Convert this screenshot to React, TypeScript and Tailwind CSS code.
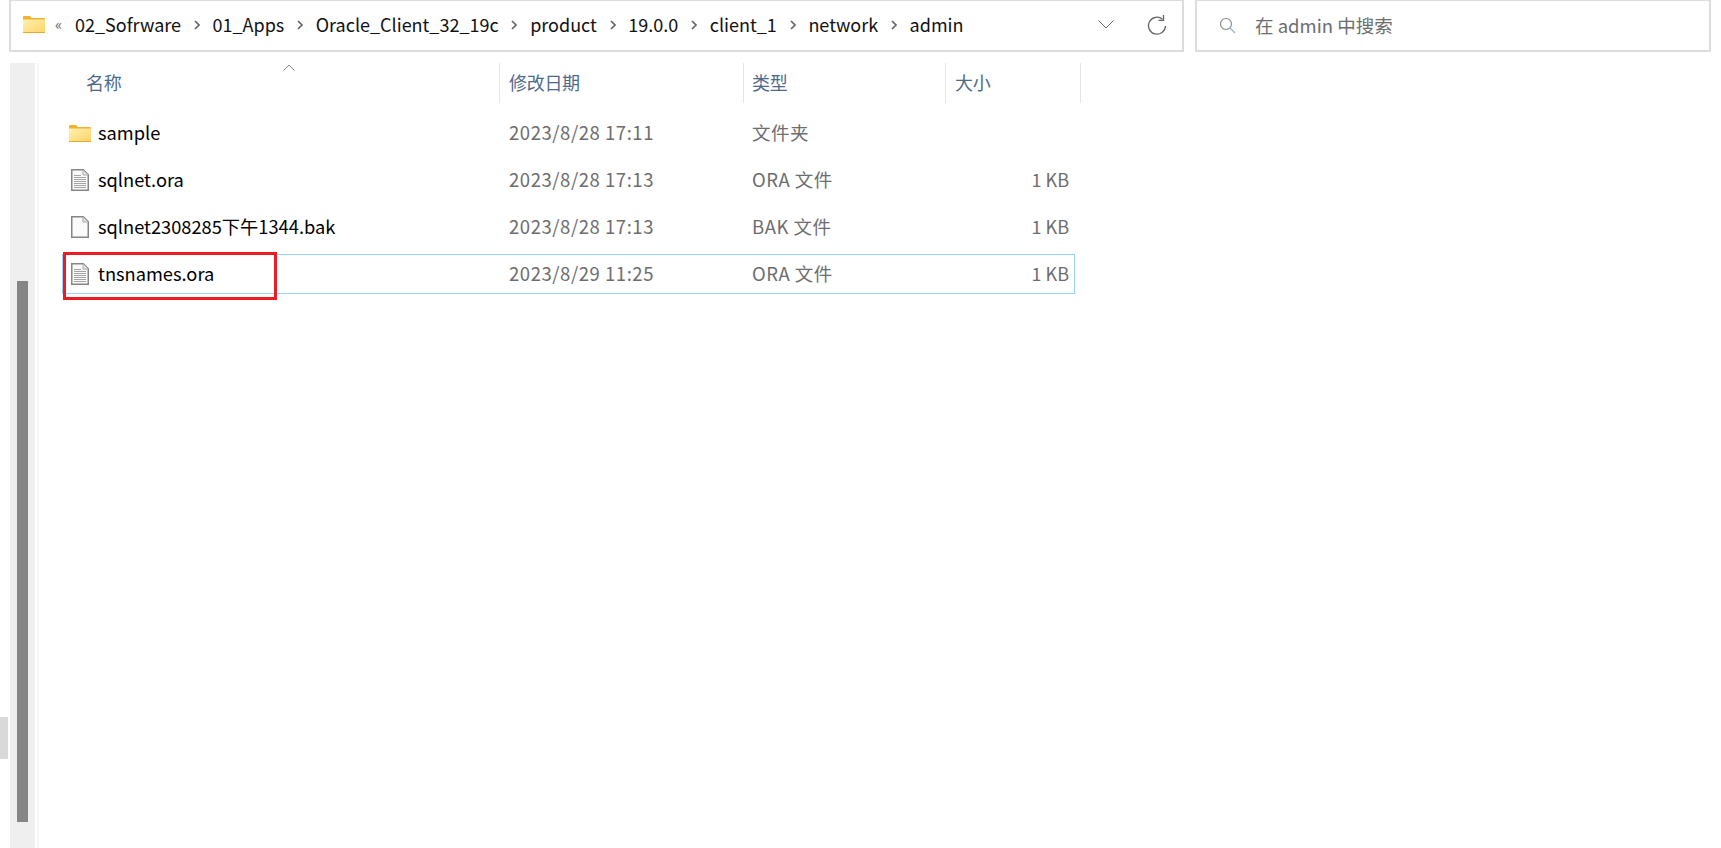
import { Fragment } from 'react'

const crumbs = ['02_Sofrware', '01_Apps', 'Oracle_Client_32_19c', 'product', '19.0.0', 'client_1', 'network', 'admin']

const rows = [
  { name: 'sample', date: '2023/8/28 17:11', type: '文件夹', size: '', icon: 'folder' },
  { name: 'sqlnet.ora', date: '2023/8/28 17:13', type: 'ORA 文件', size: '1 KB', icon: 'text' },
  { name: 'sqlnet2308285下午1344.bak', date: '2023/8/28 17:13', type: 'BAK 文件', size: '1 KB', icon: 'blank' },
  { name: 'tnsnames.ora', date: '2023/8/29 11:25', type: 'ORA 文件', size: '1 KB', icon: 'text', selected: true },
]

function FolderIcon({ className }: { className: string }) {
  return (
    <svg viewBox="0 0 22 17" className={className}>
      <defs>
        <linearGradient id="fold" x1="0" y1="0" x2="1" y2="1">
          <stop offset="0" stopColor="#fff0b0" />
          <stop offset="1" stopColor="#fdd468" />
        </linearGradient>
      </defs>
      <path d="M0 1a1 1 0 0 1 1-1h6l2 2h12a1 1 0 0 1 1 1v2H0z" fill="#f2b330" />
      <path d="M0 3.5h22V17H0z" fill="url(#fold)" />
      <path d="M0 16h22v1H0z" fill="#eba92b" />
    </svg>
  )
}

function DocIcon({ lines }: { lines: boolean }) {
  return (
    <svg viewBox="0 0 18 22" className="w-[18px] h-[22px] shrink-0">
      <path d="M.75.75h11.5l5 5v15.5H.75z" fill="#fafafa" stroke="#868686" strokeWidth="1.5" />
      <path d="M12 1v5h5" fill="#e8e8e8" stroke="#a8a8a8" />
      {lines && (
        <path d="M3 6.5h7M3 8.5h12M3 10.5h12M3 12.5h12M3 14.5h12M3 16.5h12M3 18.5h12" stroke="#a3a3a3" strokeWidth="1" />
      )}
    </svg>
  )
}

export default function App() {
  return (
    <div className="w-[1721px] h-[848px] overflow-hidden bg-white font-['Noto_Sans_CJK_SC',sans-serif] flex flex-col">
      {/* Address and search */}
      <div className="flex h-[52px] shrink-0 pl-[9px] gap-[11px]">
        <div className="w-[1175px] border-2 border-t border-[#dcdcdc] flex items-center pl-[12px] pb-[2px] text-[18px] text-[#111]">
          <FolderIcon className="w-[22px] h-[17px] shrink-0" />
          <span className="ml-[10px] w-[20px] text-[15px] text-[#666]">«</span>
          {crumbs.map((c, i) => (
            <Fragment key={c}>
              {i > 0 && (
                <svg viewBox="0 0 6 10" className="w-[6px] h-[10px] mx-[12.75px] shrink-0">
                  <path d="M1 1l4 4-4 4" fill="none" stroke="#666" strokeWidth="1.7" />
                </svg>
              )}
              <span className="whitespace-nowrap">{c}</span>
            </Fragment>
          ))}
          <svg viewBox="0 0 16 9" className="w-[16px] h-[9px] ml-auto shrink-0">
            <path d="M.5.5L8 8 15.5.5" fill="none" stroke="#666" />
          </svg>
          <svg viewBox="0 0 20 22" className="w-[20px] h-[22px] ml-[33px] mr-[15px] shrink-0">
            <path d="M15.5 5.2A8.5 8.5 0 1 0 18.5 12" fill="none" stroke="#666" strokeWidth="1.3" />
            <path d="M11.5 6.3h5V1" fill="none" stroke="#666" strokeWidth="1.3" />
          </svg>
        </div>
        <div className="w-[516px] border-2 border-t border-[#dcdcdc] flex items-center pl-[22px] gap-[19px] text-[18.5px] text-[#6d6d6d]">
          <svg viewBox="0 0 17 17" className="w-[17px] h-[17px] shrink-0">
            <circle cx="7" cy="7" r="5.5" fill="none" stroke="#8b8b8b" strokeWidth="1.2" />
            <path d="M11 11l5 5" stroke="#8fb4d8" strokeWidth="1.3" />
          </svg>
          <span>在 admin 中搜索</span>
        </div>
      </div>

      <div className="flex flex-1 pt-[11px] min-h-0">
        {/* Left edge: pane tab and scroll bar */}
        <div className="w-[10px] shrink-0 pt-[654px]">
          <div className="w-[8px] h-[42px] bg-[#d9d9d9]" />
        </div>
        <div className="w-[25px] shrink-0 bg-[#efefef] pt-[218px] pl-[7px]">
          <div className="w-[11px] h-[541px] bg-[#868686]" />
        </div>
        <div className="w-[2px] shrink-0" />
        <div className="w-[2px] shrink-0 bg-[#f7f7f7]" />

        {/* File list */}
        <div className="flex-1 min-w-0">
          <div className="relative flex h-[40px] text-[18px] text-[#4d6a8c] tracking-[-0.3px]">
            <svg viewBox="0 0 12 7" className="absolute left-[244px] top-[1px] w-[12px] h-[7px]">
              <path d="M.5 6.5L6 1l5.5 5.5" fill="none" stroke="#888" />
            </svg>
            <div className="w-[461px] pl-[47px] pt-[6px] border-r border-[#e5e5e5]">名称</div>
            <div className="w-[244px] pl-[9px] pt-[6px] border-r border-[#e5e5e5]">修改日期</div>
            <div className="w-[202px] pl-[8px] pt-[6px] border-r border-[#e5e5e5]">类型</div>
            <div className="w-[135px] pl-[9px] pt-[6px] border-r border-[#e5e5e5]">大小</div>
          </div>

          <div className="ml-[23px] w-[1013px] pt-[10px] flex flex-col gap-[7px]">
            {rows.map((r) => (
              <div
                key={r.name}
                className={`relative h-[40px] flex items-center border ${
                  r.selected ? 'border-[#99d1ff]' : 'border-transparent'
                }`}
              >
                <div className="w-[35px] flex items-center shrink-0">
                  {r.icon === 'folder' ? (
                    <div className="pl-[6px]">
                      <FolderIcon className="w-[22px] h-[17px] shrink-0" />
                    </div>
                  ) : (
                    <div className="pl-[8px]">
                      <DocIcon lines={r.icon === 'text'} />
                    </div>
                  )}
                </div>
                <div className="w-[411px] text-[18.25px] text-black whitespace-nowrap">{r.name}</div>
                <div className="w-[243px] text-[18.5px] tracking-[0.55px] text-[#6d6d6d] whitespace-nowrap">{r.date}</div>
                <div className="w-[200px] text-[18.5px] tracking-[0.5px] text-[#6d6d6d] whitespace-nowrap">{r.type}</div>
                <div className="flex-1 pb-[2px] pr-[5px] text-right text-[18px] text-[#6d6d6d]">{r.size}</div>
                {r.selected && (
                  <div className="absolute left-0 -top-[3px] w-[214px] h-[48px] border-[3px] border-[#ed1c24]" />
                )}
              </div>
            ))}
          </div>
        </div>
      </div>
    </div>
  )
}
